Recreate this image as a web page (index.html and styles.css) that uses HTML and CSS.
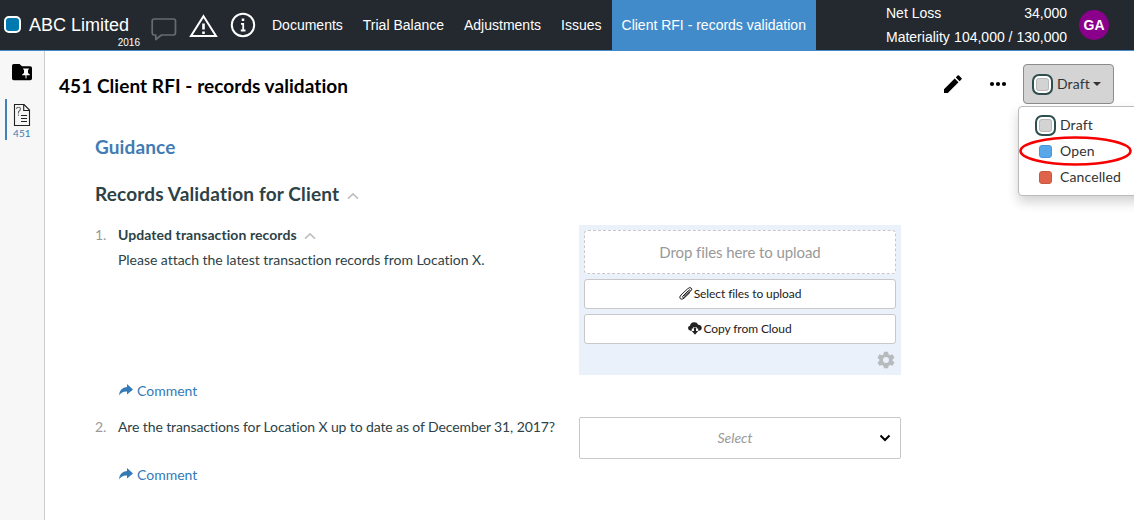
FILE: index.html
```html
<!DOCTYPE html>
<html lang="en">
<head>
<meta charset="utf-8">
<title>Client RFI - records validation</title>
<link rel="stylesheet" href="styles.css">
</head>
<body>
<header class="topbar">
  <span class="entity-mark"></span>
  <div class="entity"><div class="entity-name">ABC Limited</div><div class="entity-year">2016</div></div>
  <div class="top-icons">
    <svg width="26" height="24" viewBox="0 0 26 24" fill="none" stroke="#666b70" stroke-width="1.7" stroke-linejoin="round"><path d="M3 2H22.500Q24.500 2 24.500 4V15Q24.500 18 22.500 18H10.500L4.800 22.500V18H3Q1.200 18 1.200 15V4Q1.200 2 3 2Z"/></svg>
    <svg width="29" height="24" viewBox="0 0 29 24" fill="none" stroke="#fff" stroke-width="2"><path d="M14.500 2.200L27 22H2Z"/><path d="M14.500 9.500V15.500M14.500 17.500V20" stroke-width="2.600"/></svg>
    <svg width="26" height="26" viewBox="0 0 26 26" fill="none" stroke="#fff" stroke-width="2"><circle cx="13" cy="13" r="11.200"/><path d="M13 6.500V9" stroke-width="2.500"/><path d="M11 11.800H13.200V18M10.800 18.500H15.500" stroke-width="1.800"/></svg>
  </div>
  <nav class="nav">
    <a>Documents</a><a>Trial Balance</a><a>Adjustments</a><a>Issues</a><a class="active">Client RFI - records validation</a>
  </nav>
  <div class="figures">
    <div class="figure"><span>Net Loss</span><span>34,000</span></div>
    <div class="figure"><span>Materiality</span><span>104,000 / 130,000</span></div>
  </div>
  <span class="avatar">GA</span>
</header>
<div class="shell">
  <aside class="sidebar">
    <svg class="folder" width="20" height="17" viewBox="0 0 20 17"><path d="M1.800 0H7.500L10 2.200H18.200Q20 2.200 20 4V14.500Q20 16.300 18.200 16.300H1.800Q0 16.300 0 14.500V1.800Q0 0 1.800 0Z"/><path d="M11 4.500H17V5.500H16V9L17.800 10.500V11.300H14.500V14L14 14.800L13.500 14V11.300H10.200V10.500L12 9V5.500H11Z" fill="#fff"/></svg>
    <div class="doc-tab">
      <svg width="18" height="23" viewBox="0 0 18 23" fill="none" stroke="#222" stroke-width="1.100"><path d="M1.500 .5H11L16.500 6V21.500H1.500ZM10.700 .5V6.500H16.500"/><path d="M8 11.500H14M8 14.500H14M8 17.500H14" stroke-width="1.200"/><path d="M3.500 5Q3.500 3.200 5.500 3.200T7.500 5Q7.500 6.200 5.500 7.800V9.400M5.500 10.500V11.700" stroke="#666"/></svg>
      <span>451</span>
    </div>
  </aside>
  <main class="main">
    <div class="titlebar">
      <h1>451 Client RFI - records validation</h1>
      <svg class="pencil" width="18" height="18" viewBox="0 0 18 18"><path d="M0 14.200L10.700 3.500L14.500 7.300L3.800 18H0ZM11.800 2.400L13.600 .6Q14.300 -.1 15 .6L17.400 3Q18.100 3.700 17.400 4.400L15.600 6.200Z"/></svg>
      <svg class="dots" width="18" height="6" viewBox="0 0 18 6"><circle cx="3" cy="3" r="2.100"/><circle cx="9" cy="3" r="2.100"/><circle cx="15" cy="3" r="2.100"/></svg>
      <div class="status">
        <button class="status-button"><span class="swatch draft"></span><span class="status-label">Draft</span><i class="caret"></i></button>
        <div class="menu">
          <div class="option"><span class="swatch draft"></span><span class="option-label">Draft</span></div>
          <div class="option"><span class="swatch open"></span><span class="option-label">Open</span></div>
          <div class="option"><span class="swatch cancelled"></span><span class="option-label">Cancelled</span></div>
          <svg class="ring" width="114" height="32" viewBox="0 0 114 32"><ellipse cx="56.500" cy="16" rx="55" ry="13.500" fill="none" stroke="#f90000" stroke-width="2.500"/></svg>
        </div>
      </div>
    </div>
    <div class="content">
      <h2 class="guidance">Guidance</h2>
      <h2 class="section">Records Validation for Client <svg width="12" height="8" viewBox="0 0 12 8"><path d="M1 6.700L6 2L11 6.700"/></svg></h2>
      <section class="question first">
        <span class="number">1.</span>
        <div class="body">
          <div class="qtitle">Updated transaction records <svg width="12" height="8" viewBox="0 0 12 8"><path d="M1 6.700L6 2L11 6.700"/></svg></div>
          <div class="qtext">Please attach the latest transaction records from Location X.</div>
          <a class="comment"><svg width="14" height="12" viewBox="0 0 14 12"><path d="M8 0L14 5.500L8 10.500V7.500Q3 7 0 11.500Q.5 3.500 8 3Z"/></svg>Comment</a>
        </div>
        <div class="upload">
          <div class="drop">Drop files here to upload</div>
          <button class="upload-button"><svg width="14" height="13" viewBox="0 0 14 13" fill="none" stroke="#222" stroke-width="1"><path d="M9.500 3.500L4 9Q3 10 3.800 10.500Q4.500 11 5.300 10.200L11.800 4Q13.700 2 12 .9Q10.500 0 8.600 1.800L2 8Q-.2 10.200 1.300 11.700Q3 13 5 11.200L11 5.500M9.500 3.500Q10.600 2.300 11 3.200Q11 3.800 10 4.700L5 9.300"/></svg>Select files to upload</button>
          <button class="upload-button"><svg width="14" height="13" viewBox="0 0 14 13" fill="#222"><path d="M2.500 8.700Q0 8.200 0 6Q0 4 2 3.700Q2.500 .5 6 .3Q9 .2 10.200 2.700Q13.700 3 13.800 6Q13.700 8.500 11 8.700H10.200V6.500H8.600V5H5.400V6.500H3.800V8.700Z"/><path d="M6 5.500H8V9H10.200L7 12.700L3.800 9H6Z"/></svg>Copy from Cloud</button>
          <svg class="gear" width="18" height="18" viewBox="0 0 24 24"><path fill-rule="evenodd" d="M9.300 1H14.700L15.400 4.300L17.400 5.500L20.700 4.300L23.300 9L20.800 11.200V13L23.300 15.200L20.700 19.800L17.400 18.700L15.400 19.900L14.700 23H9.300L8.600 19.900L6.600 18.700L3.300 19.800L.7 15.200L3.200 13V11.200L.7 9L3.300 4.300L6.600 5.500L8.600 4.300ZM12 8A4 4 0 1 0 12 16A4 4 0 1 0 12 8Z"/></svg>
        </div>
      </section>
      <section class="question second">
        <span class="number">2.</span>
        <div class="body">
          <div class="qtext">Are the transactions for Location X up to date as of December 31, 2017?</div>
          <a class="comment"><svg width="14" height="12" viewBox="0 0 14 12"><path d="M8 0L14 5.500L8 10.500V7.500Q3 7 0 11.500Q.5 3.500 8 3Z"/></svg>Comment</a>
        </div>
        <div class="select"><span>Select</span><svg width="12" height="8" viewBox="0 0 12 8"><path d="M1.500 1.500L6 6L10.500 1.500" fill="none" stroke="#000" stroke-width="2"/></svg></div>
      </section>
    </div>
  </main>
</div>
</body>
</html>
```

FILE: styles.css
```css
* { box-sizing: border-box; }
body { margin: 0; width: 1134px; height: 520px; overflow: hidden; background: #fff; font-family: Lato, sans-serif; font-size: 14px; color: #2c4246; font-variant-ligatures: none; }
svg { display: block; flex: none; }
button { font: inherit; margin: 0; }
h1, h2 { margin: 0; font-weight: bold; }
.topbar { display: flex; height: 51px; background: #23292f; border-bottom: 1px solid #428bca; font-family: "Liberation Sans", Arial, sans-serif; color: #fff; white-space: nowrap; }
.entity-mark { flex: none; width: 17px; height: 17px; margin: 16px 8px 0 4px; border: 2px solid #fff; border-radius: 5px; background: #0079b0; }
.entity { width: 111px; padding-top: 14px; }
.entity-name { font-size: 18px; line-height: 22px; }
.entity-year { font-size: 10px; line-height: 12px; text-align: right; padding-top: 1px; }
.top-icons { display: flex; width: 122px; padding: 12px 0 0 11px; }
.top-icons svg:nth-child(1) { margin-top: 5px; }
.top-icons svg:nth-child(2) { margin: 2px 0 0 12px; }
.top-icons svg:nth-child(3) { margin: 0 0 0 12px; }
.nav { display: flex; width: 554px; line-height: 50px; }
.nav a { padding: 0 10px; }
.nav .active { background: #428bca; }
.figures { width: 181px; margin-left: 70px; padding-top: 1px; line-height: 24px; }
.figure { display: flex; justify-content: space-between; }
.avatar { flex: none; width: 30px; height: 30px; margin: 10px 0 0 12px; border-radius: 50%; background: #8b008b; text-align: center; font-weight: bold; font-size: 14px; line-height: 30px; }
.shell { display: flex; height: 469px; }
.sidebar { flex: none; width: 45px; background: #f7f7f7; border-right: 1px solid #ccc; padding-top: 13px; }
.folder { margin-left: 12px; }
.doc-tab { margin: 18px 0 0 5px; width: 34px; height: 41px; border-left: 2px solid #4580b5; padding: 5px 0 0 6px; font-size: 10px; line-height: 13px; color: #427bb4; letter-spacing: .1px; }
.main { flex: 1; min-width: 0; }
.titlebar { display: flex; height: 68px; padding: 13px 20px 0 14px; }
h1 { flex: none; width: 884px; font-size: 19px; line-height: 44px; color: #000; letter-spacing: .06px; }
.pencil { margin: 11px 0 0 1px; }
.dots { margin: 17px 0 0 27px; }
.status { position: relative; margin-left: 16px; }
.status-button { display: flex; align-items: center; width: 91px; height: 40px; padding: 0 0 0 8px; color: #333; background: #d4d4d4; border: 1px solid #8c8c8c; border-radius: 4px; }
.status-label { padding-bottom: 2px; letter-spacing: .1px; }
.swatch { flex: none; width: 13px; height: 13px; border: 1px solid #aaa; border-radius: 3px; }
.swatch.draft { width: 21px; height: 21px; border: 2px solid #2f4f4f; border-radius: 7px; background: #d3d3d3; box-shadow: inset 0 0 0 2px #fff, inset 0 0 0 3px #b8b8b8; }
.status-button .draft { margin-right: 4px; }
.caret { margin-left: 3px; border: 4px solid transparent; border-top-color: #333; border-bottom: 0; }
.menu { position: absolute; top: 42px; left: -5px; width: 130px; height: 90px; padding: 5px 0 0 16px; border: 1px solid #bbb; border-radius: 4px; background: #fff; box-shadow: 0 6px 12px rgba(0,0,0,.18); color: #333; }
.option { display: flex; align-items: center; height: 26px; gap: 4px; }
.option-label { padding-bottom: 2px; letter-spacing: .12px; }
.swatch.open, .swatch.cancelled { margin: 0 4px; }
.swatch.open { background: #58a7e9; border-color: #4897da; }
.swatch.cancelled { background: #df634a; border-color: #c9583f; }
.ring { position: absolute; left: 0; top: 28px; }
.content { padding-left: 50px; }
.guidance { padding-top: 14px; font-size: 19px; line-height: 28px; color: #427bb4; letter-spacing: .12px; }
.section { display: flex; align-items: center; gap: 8px; margin-top: 19px; font-size: 19px; line-height: 28px; letter-spacing: .16px; }
.section svg, .qtitle svg { fill: none; stroke: #c0c0c0; stroke-width: 1.700; margin-top: 4px; }
.question { display: flex; }
.question.first { margin-top: 17px; height: 192px; }
.number { width: 23px; color: #999; line-height: 20px; }
.body { width: 461px; white-space: nowrap; display: flex; flex-direction: column; }
.qtitle { display: flex; align-items: center; gap: 7px; font-weight: bold; line-height: 20px; margin-bottom: 5px; letter-spacing: .07px; }
.qtitle svg { margin-top: 2px; }
.qtext { line-height: 20px; letter-spacing: -.03px; }
.second .qtext { letter-spacing: -.11px; }
.comment { display: flex; gap: 4px; padding-left: 1px; color: #337ab7; line-height: 20px; margin-top: 111px; }
.comment svg { fill: #337ab7; margin-top: 3px; }
.second .comment { margin-top: 28px; }
.upload { width: 322px; height: 150px; padding: 5px; background: #eaf1fa; }
.drop { height: 44px; border: 1px dashed #c8c8c8; border-radius: 4px; background: #fff; color: #999; font-size: 15px; line-height: 42px; text-align: center; letter-spacing: -.08px; }
.upload-button { display: flex; align-items: center; justify-content: center; width: 312px; height: 30px; padding: 0 0 2px; margin-top: 5px; background: #fff; border: 1px solid #c8c8c8; border-radius: 3px; font-size: 12px; letter-spacing: -.08px; color: #222; gap: 1px; }
.upload-button svg { margin-top: 1px; }
.gear { fill: #b7bbbe; margin: 7px 1px 0 auto; }
.select { display: flex; align-items: center; width: 322px; height: 42px; border: 1px solid #c8c8c8; border-radius: 2px; padding-right: 9px; color: #999; font-style: italic; }
.select span { flex: 1; padding: 0 0 2px 11px; text-align: center; }
```
